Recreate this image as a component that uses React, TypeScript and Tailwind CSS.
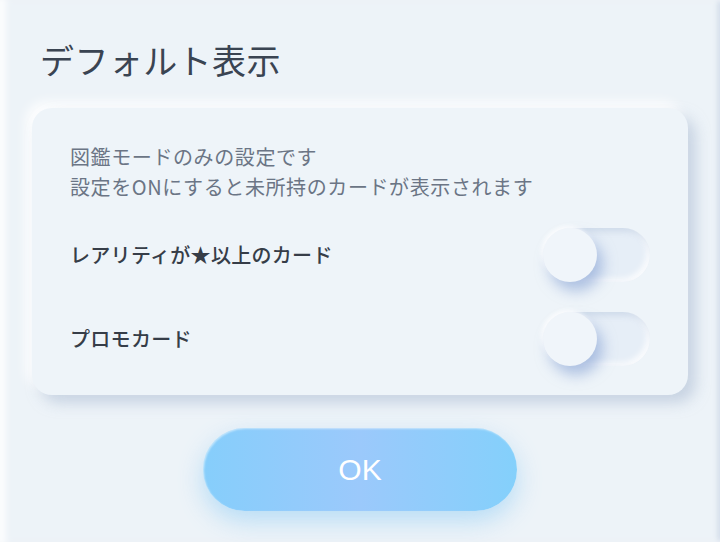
import React, { useState } from 'react';

function Toggle({ on, onChange }: { on: boolean; onChange: () => void }) {
    return (
        <button
            onClick={onChange}
            className="relative w-[107px] h-[54px] rounded-full bg-[#e6eef7] shadow-[inset_3px_3px_6px_rgba(170,188,214,0.45),inset_-3px_-3px_6px_rgba(255,255,255,0.9)] shrink-0"
        >
            <span
                className={`absolute top-0 ${on ? 'left-[53px]' : 'left-0'} w-[54px] h-[54px] rounded-full bg-[#f0f5fa] shadow-[6px_9px_14px_rgba(130,158,210,0.6),-2px_-2px_4px_rgba(255,255,255,0.9)] transition-all`}
            />
        </button>
    );
}

export default function App() {
    const [rarity, setRarity] = useState(false);
    const [promo, setPromo] = useState(false);

    return (
        <div
            className="w-[720px] h-[542px] bg-[#edf3f8] flex flex-col overflow-hidden shadow-[inset_6px_0_6px_rgba(255,255,255,0.8),inset_-3px_0_4px_rgba(200,212,228,0.6)]"
            style={{ fontFamily: '"Noto Sans CJK JP", "Noto Sans", sans-serif' }}
        >
            <h1 className="mt-[38px] ml-[40px] text-[34px] leading-[44px] tracking-[0.4px] text-[#3a4452] font-normal">デフォルト表示</h1>

            <div className="mt-[26px] mx-[32px] w-[656px] rounded-[20px] bg-[#eef4f9] pt-[34px] pb-[29px] px-[38px] shadow-[8px_8px_14px_rgba(170,186,210,0.55),-6px_-6px_12px_rgba(255,255,255,0.95)]">
                <p className="text-[20px] leading-[30px] tracking-[0.6px] text-[#6b7585]">
                    図鑑モードのみの設定です
                    <br />
                    設定をONにすると未所持のカードが表示されます
                </p>
                <div className="mt-[26px] flex items-center justify-between">
                    <span className="text-[20px] leading-[30px] tracking-[0.3px] font-medium text-[#363d48]">レアリティが★以上のカード</span>
                    <Toggle on={rarity} onChange={() => setRarity(!rarity)} />
                </div>
                <div className="mt-[30px] flex items-center justify-between">
                    <span className="text-[20px] leading-[30px] tracking-[0.3px] font-medium text-[#363d48]">プロモカード</span>
                    <Toggle on={promo} onChange={() => setPromo(!promo)} />
                </div>
            </div>

            <div className="mt-[33px] flex justify-center">
                <button
                    className="w-[314px] h-[83px] rounded-full bg-[linear-gradient(to_right,#86cefb,#9bc9fb,#84d0fb)] text-white text-[30px] shadow-[0_10px_24px_rgba(120,195,245,0.45),inset_1px_1px_2px_rgba(255,255,255,0.5)]"
                    style={{ fontFamily: '"Liberation Sans", sans-serif' }}
                >
                    OK
                </button>
            </div>
        </div>
    );
}
